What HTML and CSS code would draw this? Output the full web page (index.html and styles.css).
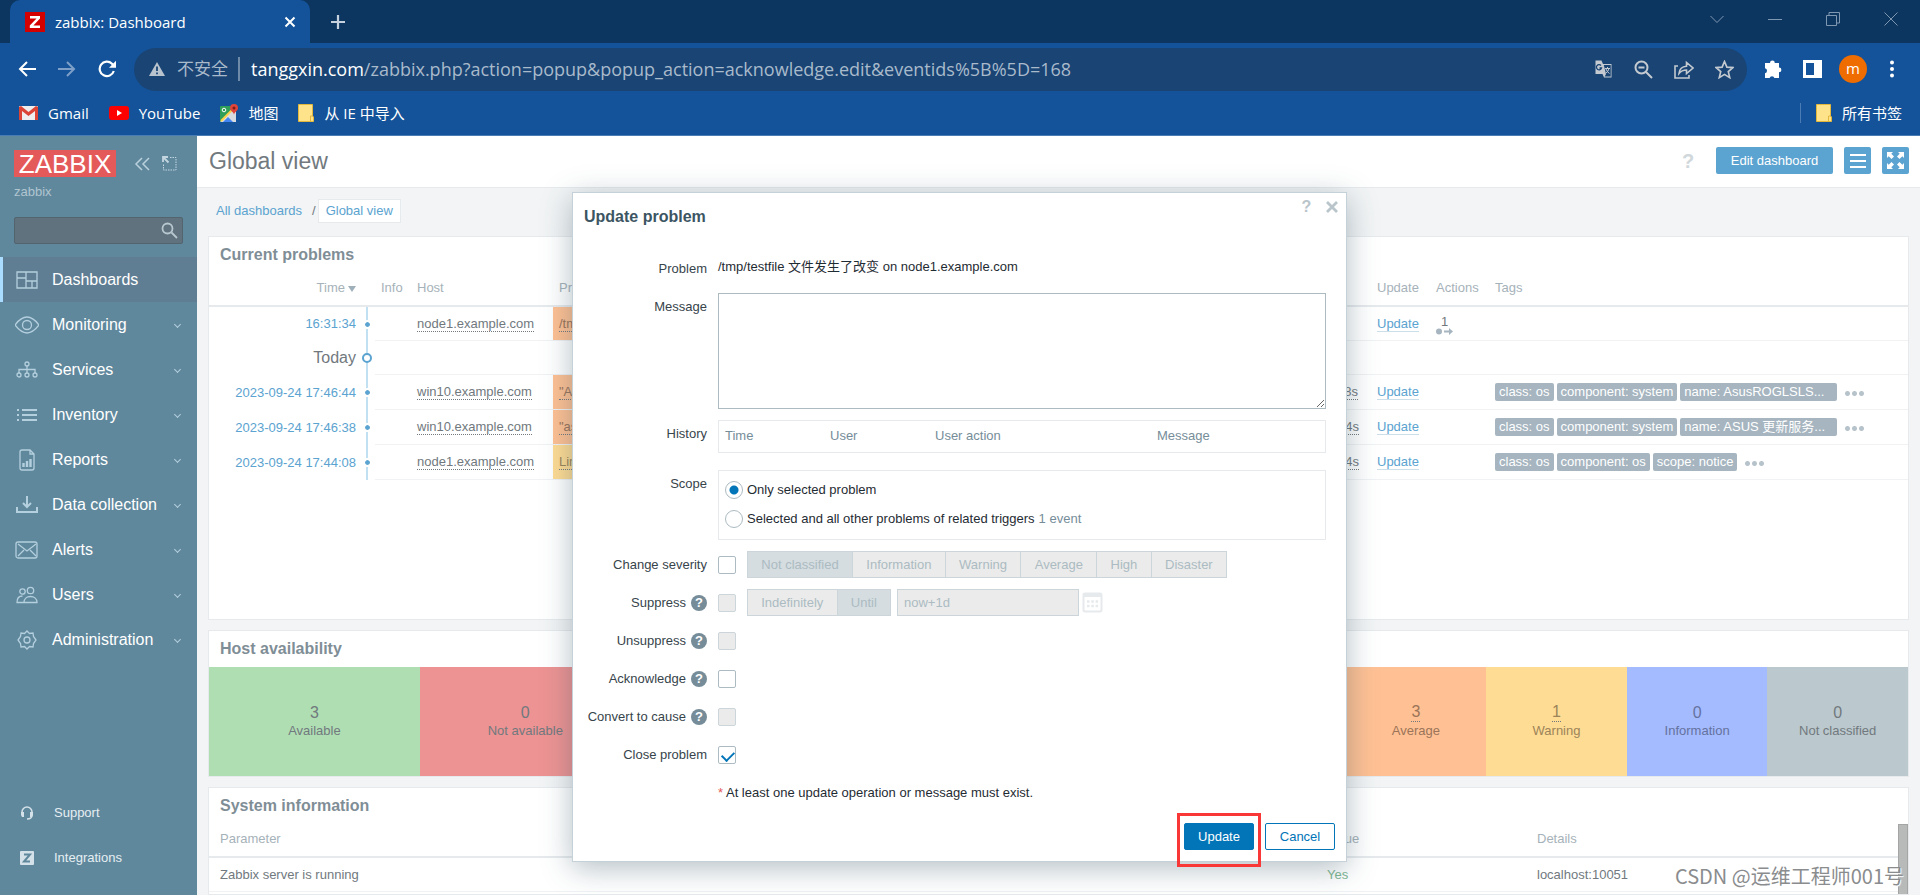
FILE: index.html
```html
<!DOCTYPE html>
<html lang="en">
<head>
<meta charset="utf-8">
<title>zabbix: Dashboard</title>
<link rel="stylesheet" href="styles.css">
</head>
<body>
<header class="browser">
  <div class="tabstrip">
    <div class="tab">
      <svg class="favicon" width="20" height="20" viewBox="0 0 20 20"><rect width="20" height="20" fill="#d40000"/><path d="M5 4h10v2.6L8.4 13.6H15V16H4.800V13.500L11.500 6.500H5z" fill="#fff"/></svg>
      <span class="tab-title">zabbix: Dashboard</span>
      <button class="icon-btn" aria-label="Close tab"><svg width="12" height="12" viewBox="0 0 12 12"><path d="M1.500 1.500l9 9M10.500 1.500l-9 9" stroke="#fff" stroke-width="2"/></svg></button>
    </div>
    <button class="icon-btn new-tab" aria-label="New tab"><svg width="16" height="16" viewBox="0 0 16 16"><path d="M8 1v14M1 8h14" stroke="#c5d1de" stroke-width="2.200"/></svg></button>
    <div class="window-controls">
      <svg width="14" height="14" viewBox="0 0 14 14"><path d="M.5 4L7 10.500 13.500 4"/></svg>
      <svg width="14" height="14" viewBox="0 0 14 14"><path d="M0 7.500h14"/></svg>
      <svg width="14" height="14" viewBox="0 0 14 14"><path d="M.5 3.500h10v10H.5zM3 3.500V.5h10.500v10.500h-3"/></svg>
      <svg width="14" height="14" viewBox="0 0 14 14"><path d="M.5.5l13 13M13.500.5l-13 13"/></svg>
    </div>
  </div>
  <div class="toolbar">
    <button class="icon-btn" aria-label="Back"><svg width="18" height="16" viewBox="0 0 18 16" fill="none" stroke="#fff" stroke-width="2"><path d="M18 8H2M9 1L2 8l7 7"/></svg></button>
    <button class="icon-btn" aria-label="Forward"><svg width="18" height="16" viewBox="0 0 18 16" fill="none" stroke="#7d9fc8" stroke-width="2"><path d="M0 8h16M9 1l7 7-7 7"/></svg></button>
    <button class="icon-btn" aria-label="Reload"><svg width="18" height="18" viewBox="0 0 18 18"><path d="M15.800 11A7.200 7.200 0 1 1 14 3.800L16 6" fill="none" stroke="#fff" stroke-width="2.200"/><path d="M18 .8v7h-7z" fill="#fff"/></svg></button>
    <div class="omnibox">
      <svg width="16" height="14" viewBox="0 0 16 14"><path d="M8 0l8 14H0z" fill="#b9c3cd"/><path d="M8 4.500v4.500M8 10.500v1.800" stroke="#194474" stroke-width="1.800"/></svg>
      <span class="insecure">不安全</span>
      <span class="url"><span class="domain">tanggxin.com</span>/zabbix.php?action=popup&amp;popup_action=acknowledge.edit&amp;eventids%5B%5D=168</span>
      <div class="omni-icons">
        <svg width="19" height="19" viewBox="0 0 19 19"><path d="M1.500.5h6L9 4h8.500v13.500H10L8.500 14h-7z" fill="#c4cad0"/><path d="M9.800 5h6.900v11.500h-6L12 14z" fill="#194474"/><path d="M7 5.500a2.600 2.600 0 1 0 .5 2.500H5.500" fill="none" stroke="#194474" stroke-width="1.300"/><path d="M11 8.500h5M13.500 7v1.500M15 8.500q-1 3.500-3 4.500M12 9q1 3 3.500 4.500" fill="none" stroke="#c4cad0"/></svg>
        <svg width="19" height="19" viewBox="0 0 19 19" fill="none" stroke="#c4cad0" stroke-width="2"><circle cx="7.500" cy="7.500" r="6"/><path d="M12 12l6 6M4.500 7.500h6"/></svg>
        <svg width="20" height="19" viewBox="0 0 20 19" fill="none" stroke="#c4cad0" stroke-width="1.600"><path d="M4 6H1v12h14v-3M5 13.500c.5-5 3-7 7.500-7.300V2.500L19 8l-6.500 5.500V10C9 10 7 11 5 13.500z"/></svg>
        <svg width="19" height="19" viewBox="0 0 19 19"><path d="M9.500 1.500l2.400 5.600 6 .5-4.600 4 1.400 6-5.200-3.200-5.200 3.200 1.400-6-4.600-4 6-.5z" fill="none" stroke="#c4cad0" stroke-width="1.700"/></svg>
      </div>
    </div>
    <div class="toolbar-right">
      <svg width="20" height="20" viewBox="0 0 20 20"><path d="M2 4h5a2.400 2.400 0 1 1 4.800 0H16v4.500a2.400 2.400 0 1 1 0 4.800V19h-4.600a2.500 2.500 0 0 0-4.800 0H2v-4.800a2.500 2.500 0 0 0 0-4.900z" fill="#fff"/></svg>
      <svg width="19" height="18" viewBox="0 0 19 18"><path d="M0 0h19v18H0zM3 3v12h8V3z" fill="#fff" fill-rule="evenodd"/></svg>
      <span class="avatar">m</span>
      <svg width="6" height="18" viewBox="0 0 6 18" fill="#fff"><circle cx="3" cy="2.500" r="2"/><circle cx="3" cy="9" r="2"/><circle cx="3" cy="15.500" r="2"/></svg>
    </div>
  </div>
  <nav class="bookmarks">
    <a href="#"><svg width="19" height="14" viewBox="0 0 19 14"><rect width="19" height="14" rx="1" fill="#eee"/><path d="M0 1v13h3V5l6.500 5L16 5v9h3V1l-2-1-7.500 6L2 0z" fill="#dc4436"/></svg>Gmail</a>
    <a href="#"><svg width="20" height="14" viewBox="0 0 20 14"><rect width="20" height="14" rx="3" fill="#f00"/><path d="M8 4l5 3-5 3z" fill="#fff"/></svg>YouTube</a>
    <a href="#"><svg width="18" height="18" viewBox="0 0 18 18"><rect y="2" width="16" height="16" rx="1" fill="#2f9e58"/><path d="M0 18L16 2v16z" fill="#d9dde0"/><path d="M3 18l5-5 5 5z" fill="#4285f4"/><path d="M1 17L12 6" stroke="#fbd14b" stroke-width="2"/><path d="M14 11c0-3-4-4-4-7a4 4 0 0 1 8 0c0 3-4 4-4 7z" fill="#e0443a"/><circle cx="14" cy="4" r="1.500" fill="#7c1d16"/><circle cx="4" cy="6" r="1.800" fill="none" stroke="#fff"/></svg>地图</a>
    <a href="#"><svg width="16" height="18" viewBox="0 0 16 18"><path d="M.5.5h14V12l1 1v4.500H.5z" fill="#ffe38b" stroke="#e3b83d"/><path d="M12.500 17v-5h2" fill="none" stroke="#e3b83d"/></svg>从 IE 中导入</a>
    <a href="#" class="all-bookmarks"><svg width="16" height="18" viewBox="0 0 16 18"><path d="M.5.5h14V12l1 1v4.500H.5z" fill="#ffe38b" stroke="#e3b83d"/><path d="M12.500 17v-5h2" fill="none" stroke="#e3b83d"/></svg>所有书签</a>
  </nav>
</header>

<div class="app">
  <aside class="sidebar">
    <div class="brand">
      <span class="logo">ZABBIX</span>
      <button class="icon-btn" aria-label="Collapse sidebar"><svg width="16" height="14" viewBox="0 0 16 14" fill="none" stroke="#b9d0dd" stroke-width="1.500"><path d="M8 1L2 7l6 6M15 1L9 7l6 6"/></svg></button>
      <button class="icon-btn" aria-label="Hide sidebar"><svg width="15" height="15" viewBox="0 0 15 15" fill="none" stroke="#c3d6e0"><path d="M8 1.500h6v12.500H1.500V8" stroke-dasharray="1.500 1"/><path d="M1 6V1h5M1.500 1.500l5 5" stroke-width="1.800"/></svg></button>
    </div>
    <div class="server">zabbix</div>
    <div class="search">
      <input type="text" aria-label="Search">
      <svg width="17" height="17" viewBox="0 0 17 17" fill="none" stroke="#b8c8d1" stroke-width="1.800"><circle cx="6.500" cy="6.500" r="5"/><path d="M10.500 10.500l5.500 5.500"/></svg>
    </div>
    <nav class="menu">
      <a href="#" class="active"><svg viewBox="0 0 24 24"><path d="M2 4h20v16H2zM11 4v16M2 10h9M11 13h11M17 13v7"/></svg>Dashboards</a>
      <a href="#"><svg viewBox="0 0 24 24"><path d="M0 12Q6 4 12 4t12 8q-6 8-12 8T0 12z"/><circle cx="12" cy="12" r="4.500"/></svg>Monitoring<i></i></a>
      <a href="#"><svg viewBox="0 0 24 24"><circle cx="12" cy="6" r="2"/><circle cx="4" cy="17" r="2"/><circle cx="12" cy="17" r="2"/><circle cx="20" cy="17" r="2"/><path d="M12 8v7M4 15v-3.500h16V15"/></svg>Services<i></i></a>
      <a href="#"><svg viewBox="0 0 24 24"><path d="M7 7h15M7 12h15M7 17h15M2 7h2M2 12h2M2 17h2" stroke-width="2.200"/></svg>Inventory<i></i></a>
      <a href="#"><svg viewBox="0 0 24 24"><path d="M15 2H7a2 2 0 0 0-2 2v16a2 2 0 0 0 2 2h10a2 2 0 0 0 2-2V6zM15 2v4h4"/><path d="M8.500 19v-4M12 19v-6M15.500 19v-8" stroke-width="2.400"/></svg>Reports<i></i></a>
      <a href="#"><svg viewBox="0 0 24 24"><path d="M2 14v5h20v-5" stroke-width="2"/><path d="M12 3v11M8 10l4 4 4-4" stroke-width="2"/></svg>Data collection<i></i></a>
      <a href="#"><svg viewBox="0 0 24 24"><rect x="1" y="4" width="21" height="16" rx="2"/><path d="M3 6l9 7 9-7M3 18l6-6M21 18l-6-6"/></svg>Alerts<i></i></a>
      <a href="#"><svg viewBox="0 0 24 24"><circle cx="15.500" cy="7.500" r="3.200"/><circle cx="7.500" cy="8.500" r="2.700"/><path d="M9 19.500c0-8 13-8 13 0zM9 19.500H2c0-5 2-6.500 5.500-6.500"/></svg>Users<i></i></a>
      <a href="#"><svg viewBox="0 0 24 24"><circle cx="12" cy="12" r="3"/><path d="M12 3l2.500 2.500 3.500-.5.500 3.500L21 12l-2.500 3.500-.5 3.500-3.500-.5L12 21l-2.500-2.500L6 19l-.5-3.500L3 12l2.500-3.500L6 5l3.500.5z"/></svg>Administration<i></i></a>
    </nav>
    <nav class="menu-small">
      <a href="#"><svg width="14" height="14" viewBox="0 0 14 14"><path d="M2 7V6a5 5 0 0 1 10 0v3q0 4-5 4" fill="none" stroke="#d5e1e8" stroke-width="1.500"/><path d="M1 6h3v5H2L1 9zM13 6h-3v5h2l1-2z" fill="#d5e1e8"/></svg>Support</a>
      <a href="#"><svg width="14" height="14" viewBox="0 0 14 14"><rect width="14" height="14" rx="1" fill="#d5e1e8"/><path d="M4 3.500h6L4 10.500h6" fill="none" stroke="#5f889d" stroke-width="2"/></svg>Integrations</a>
    </nav>
  </aside>

  <main class="content">
    <div class="page-head">
      <h1>Global view</h1>
      <a href="#" class="help">?</a>
      <button class="head-btn edit">Edit dashboard</button>
      <button class="head-btn square" aria-label="Actions"><svg width="16" height="16" viewBox="0 0 16 16"><path d="M0 2h16M0 8h16M0 14h16" stroke="#fff" stroke-width="2"/></svg></button>
      <button class="head-btn square" aria-label="Kiosk mode"><svg width="17" height="17" viewBox="0 0 17 17"><path d="M0 0h6L4.300 1.700 7 4.500 4.500 7 1.700 4.300 0 6zM17 0v6l-1.700-1.700L12.500 7 10 4.500l2.700-2.800L11 0zM0 17v-6l1.700 1.700L4.500 10 7 12.500l-2.700 2.800L6 17zM17 17h-6l1.700-1.700L10 12.500l2.500-2.500 2.800 2.700L17 11z" fill="#fff"/></svg></button>
    </div>
    <nav class="crumbs"><a href="#">All dashboards</a><span>/</span><a href="#" class="current">Global view</a></nav>
    <div class="grid">
      <section class="widget problems">
        <h2>Current problems</h2>
        <table>
          <colgroup><col class="c-time"><col class="c-line"><col class="c-info"><col class="c-host"><col><col class="c-dur"><col class="c-act"><col class="c-act"><col class="c-tags"></colgroup>
          <thead><tr><th class="time">Time<b class="sort"></b></th><th></th><th>Info</th><th>Host</th><th>Problem</th><th>Duration</th><th>Update</th><th>Actions</th><th>Tags</th></tr></thead>
          <tbody>
            <tr><td class="time"><a href="#">16:31:34</a></td><td class="line"><b class="dot"></b></td><td></td><td><span class="dotted">node1.example.com</span></td><td class="sev average"><span class="dotted">/tmp/testfile 文件发生了改变</span></td><td></td><td><a class="upd" href="#">Update</a></td><td><span class="action">1<svg width="17" height="7" viewBox="0 0 17 7"><circle cx="3" cy="3.500" r="3"/><path d="M8 2.500h5V0l4 3.500L13 7V4.500H8z"/></svg></span></td><td></td></tr>
            <tr><td class="time today">Today</td><td class="line"><b class="ring"></b></td><td colspan="7"></td></tr>
            <tr><td class="time"><a href="#">2023-09-24 17:46:44</a></td><td class="line"><b class="dot"></b></td><td></td><td><span class="dotted">win10.example.com</span></td><td class="sev average"><span class="dotted">"AsusROGLSLService"</span></td><td><span class="dotted">11h 22m 8s</span></td><td><a class="upd" href="#">Update</a></td><td></td><td><div class="tags"><span>class: os</span><span>component: system</span><span class="long">name: AsusROGLSLS...</span><b class="more"></b></div></td></tr>
            <tr><td class="time"><a href="#">2023-09-24 17:46:38</a></td><td class="line"><b class="dot"></b></td><td></td><td><span class="dotted">win10.example.com</span></td><td class="sev average"><span class="dotted">"asus"</span></td><td><span class="dotted">1h 22m 14s</span></td><td><a class="upd" href="#">Update</a></td><td></td><td><div class="tags"><span>class: os</span><span>component: system</span><span class="long">name: ASUS 更新服务...</span><b class="more"></b></div></td></tr>
            <tr><td class="time"><a href="#">2023-09-24 17:44:08</a></td><td class="line"><b class="dot"></b></td><td></td><td><span class="dotted">node1.example.com</span></td><td class="sev warning"><span class="dotted">Linux</span></td><td><span class="dotted">1h 24m 44s</span></td><td><a class="upd" href="#">Update</a></td><td></td><td><div class="tags"><span>class: os</span><span>component: os</span><span>scope: notice</span><b class="more"></b></div></td></tr>
          </tbody>
        </table>
      </section>
      <section class="widget totals">
        <h2>Host availability</h2>
        <div class="cells">
          <div class="green"><strong>3</strong>Available</div>
          <div class="red"><strong>0</strong>Not available</div>
          <div class="grey"><strong>0</strong>Unknown</div>
          <div class="plain"><strong>3</strong>Total</div>
        </div>
      </section>
      <section class="widget totals">
        <h2>Problems by severity</h2>
        <div class="cells">
          <div class="disaster"><strong>0</strong>Disaster</div>
          <div class="high"><strong>0</strong>High</div>
          <div class="average"><strong class="dotted">3</strong>Average</div>
          <div class="warning"><strong class="dotted">1</strong>Warning</div>
          <div class="info"><strong>0</strong>Information</div>
          <div class="none"><strong>0</strong>Not classified</div>
        </div>
      </section>
      <section class="widget system">
        <h2>System information</h2>
        <div class="scroll">
          <table>
            <colgroup><col><col class="c-value"><col class="c-details"></colgroup>
            <thead><tr><th>Parameter</th><th>Value</th><th>Details</th></tr></thead>
            <tbody><tr><td>Zabbix server is running</td><td class="yes">Yes</td><td>localhost:10051</td></tr></tbody>
          </table>
          <div class="scrollbar"></div>
        </div>
      </section>
    </div>
  </main>
</div>

<form class="modal" role="dialog" aria-labelledby="modal-title">
  <div class="modal-head">
    <h2 id="modal-title">Update problem</h2>
    <button type="button" class="head-icon" aria-label="Help">?</button>
    <button type="button" class="head-icon" aria-label="Close"><svg width="12" height="12" viewBox="0 0 12 12"><path d="M1 1l10 10M11 1L1 11" stroke="#b9c5cb" stroke-width="2.800"/></svg></button>
  </div>
  <div class="form">
    <span class="label">Problem</span><div class="value">/tmp/testfile 文件发生了改变 on node1.example.com</div>
    <label for="message">Message</label><textarea id="message"></textarea>
    <span class="label">History</span>
    <div class="box history"><table><thead><tr><th class="h1">Time</th><th class="h1">User</th><th class="h2">User action</th><th>Message</th></tr></thead></table></div>
    <span class="label">Scope</span>
    <div class="box scope">
      <label><input type="radio" name="scope" checked>Only selected problem</label>
      <label><input type="radio" name="scope">Selected and all other problems of related triggers <em>1 event</em></label>
    </div>
    <label for="severity">Change severity</label>
    <div class="field"><input type="checkbox" id="severity">
      <div class="segments severity"><button type="button" class="on" disabled>Not classified</button><button type="button" disabled>Information</button><button type="button" disabled>Warning</button><button type="button" disabled>Average</button><button type="button" disabled>High</button><button type="button" disabled>Disaster</button></div>
    </div>
    <label for="suppress">Suppress<b class="hint">?</b></label>
    <div class="field"><input type="checkbox" id="suppress" disabled>
      <div class="segments until"><button type="button" disabled>Indefinitely</button><button type="button" class="on" disabled>Until</button></div>
      <input type="text" class="date" aria-label="Suppress until" value="now+1d" disabled>
      <button type="button" class="icon-btn calendar" aria-label="Open calendar" disabled><svg width="21" height="21" viewBox="0 0 21 21"><rect x="1.500" y="1.500" width="18" height="18" rx="1.500" fill="#fff" stroke="#e6eaec" stroke-width="2"/><path d="M1 1h19v4H1z" fill="#e6eaec"/><path d="M5 9.500h2.500M9.300 9.500h2.500M13.600 9.500h2.500M5 14h2.500M9.300 14h2.500M13.600 14h2.500" stroke="#e6eaec" stroke-width="2.500"/></svg></button>
    </div>
    <label for="unsuppress">Unsuppress<b class="hint">?</b></label><div class="field"><input type="checkbox" id="unsuppress" disabled></div>
    <label for="ack">Acknowledge<b class="hint">?</b></label><div class="field"><input type="checkbox" id="ack"></div>
    <label for="cause">Convert to cause<b class="hint">?</b></label><div class="field"><input type="checkbox" id="cause" disabled></div>
    <label for="close">Close problem</label><div class="field"><input type="checkbox" id="close" checked></div>
    <span></span><div class="note"><span class="star">*</span> At least one update operation or message must exist.</div>
  </div>
  <div class="modal-foot">
    <span class="marked"><button type="button" class="btn primary">Update</button></span>
    <button type="button" class="btn">Cancel</button>
  </div>
</form>
<div class="watermark">CSDN @运维工程师001号</div>
</body>
</html>
```
FILE: styles.css
```css
* { box-sizing: border-box; }
body {
  margin: 0;
  height: 100vh;
  display: flex;
  flex-direction: column;
  overflow: hidden;
  position: relative;
  background: #f2f4f5;
  color: #71797e;
  font: 13px/18px "Liberation Sans", "Noto Sans CJK SC", sans-serif;
}
button, input, textarea { font: inherit; margin: 0; }
a { color: #5ba3d0; text-decoration: none; }
h1, h2 { margin: 0; }
table { border-spacing: 0; width: 100%; table-layout: fixed; }
th { font-weight: normal; text-align: left; color: #a6b2b9; }
svg { display: block; flex: none; }
.icon-btn { border: 0; padding: 0; background: none; display: flex; }

/* Browser window */
.browser { flex: none; background: #145399; border-bottom: 1px solid #4b7db4; color: #fff; font-family: "Open Sans", "Noto Sans CJK SC", sans-serif; }
.tabstrip { display: flex; align-items: center; height: 43px; padding-left: 10px; background: #0c355f; }
.tab { display: flex; align-items: center; gap: 10px; width: 300px; height: 43px; padding: 0 14px 0 15px; background: #145399; border-radius: 10px 10px 0 0; }
.tab-title { flex: 1; font-size: 15px; }
.new-tab { margin-left: 20px; }
.window-controls { display: flex; gap: 44px; margin-left: auto; padding: 0 22px 6px 0; fill: none; stroke: #7f98b2; }
.toolbar { display: flex; align-items: center; gap: 22px; height: 53px; padding: 0 25px 1px 18px; }
.omnibox { flex: 1; display: flex; align-items: center; height: 43px; margin-left: -4px; padding: 0 13px 0 15px; border-radius: 22px; background: #194474; color: #a9bacb; }
.insecure { font-size: 17px; line-height: 24px; margin-left: 12px; padding-right: 10px; border-right: 2px solid #6d8aa8; }
.url { flex: 1; padding-left: 11px; font-size: 18px; line-height: 24px; white-space: nowrap; }
.domain { color: #fff; }
.omni-icons { display: flex; gap: 21px; }
.toolbar-right { display: flex; align-items: center; gap: 20px; margin-left: -6px; }
.avatar { width: 28px; height: 28px; line-height: 26px; margin-left: -3px; border-radius: 50%; background: #ef6c00; text-align: center; font-size: 15px; }
.toolbar-right svg:last-child { margin-left: 2px; }
.bookmarks { display: flex; align-items: center; gap: 20px; height: 39px; padding: 0 18px 5px 19px; }
.bookmarks a { display: flex; align-items: center; gap: 10px; color: #fff; font-size: 15px; }
.bookmarks .all-bookmarks { margin-left: auto; padding-left: 15px; border-left: 1px solid #4b7db4; line-height: 20px; }

/* Sidebar */
.app { flex: 1; display: flex; min-height: 0; }
.sidebar { flex: none; width: 197px; display: flex; flex-direction: column; background: #5f889d; color: #fff; }
.brand { display: flex; align-items: center; padding: 14px 14px 0; }
.logo { width: 102px; height: 27px; background: #e45959; font: 26px/28px "Liberation Sans", sans-serif; text-align: center; margin-right: 18px; }
.brand .icon-btn + .icon-btn { margin-left: 12px; }
.server { margin: 6px 14px 16px; color: #b0c5d0; }
.search { display: flex; align-items: center; height: 27px; margin: 0 14px 13px; padding-right: 4px; border: 1px solid #53646e; border-radius: 2px; background: #60727d; }
.search input { flex: 1; min-width: 0; height: 25px; padding: 0 6px; border: 0; background: none; color: #fff; }
.menu a { display: flex; align-items: center; height: 45px; padding-left: 15px; color: #fff; font-size: 16px; }
.menu svg { width: 24px; height: 24px; margin-right: 13px; fill: none; stroke: #b4cfdd; stroke-width: 1.3; }
.menu .active { background: #5f7e93; border-left: 3px solid #aadcff; padding-left: 12px; }
.menu i { width: 5px; height: 5px; margin: 0 17px 0 auto; border: solid #b4cfdd; border-width: 0 1px 1px 0; transform: rotate(45deg); }
.menu-small { margin-top: auto; padding-bottom: 15px; }
.menu-small a { display: flex; align-items: center; gap: 20px; height: 45px; padding-left: 20px; color: #e6eef2; }

/* Dashboard */
.content { flex: 1; min-width: 0; display: flex; flex-direction: column; }
.page-head { display: flex; align-items: center; height: 52px; padding: 0 11px 2px 12px; background: #fff; border-bottom: 1px solid #e6eaed; }
.page-head h1 { flex: 1; font-size: 23px; font-weight: normal; }
.help { width: 12px; margin-right: 22px; color: #d0d8dc; font-size: 20px; font-weight: bold; }
.head-btn { height: 27px; border: 0; border-radius: 2px; background: #5ba3d0; color: #fff; }
.edit { width: 117px; }
.square { display: flex; align-items: center; justify-content: center; width: 27px; padding: 0; margin-left: 11px; }
.crumbs { display: flex; align-items: center; height: 48px; padding: 0 0 2px 19px; }
.crumbs span { margin: 0 2px 0 10px; }
.crumbs .current { padding: 2px 7px; background: #fff; border: 1px solid #e6eaed; }
.grid { flex: 1; display: grid; grid-template: 384px 147px 1fr / 1fr 1fr; gap: 10px; padding: 0 11px; min-height: 0; }
.widget { background: #fff; border: 1px solid #e6eaed; min-width: 0; overflow: hidden; }
.widget h2 { padding: 0 11px; font-size: 16px; line-height: 36px; color: #7f8e96; }
.problems, .system { grid-column: 1 / -1; }
.widget th, .widget td { height: 34px; padding: 0 6px; border-bottom: 1px solid #f0f2f4; white-space: nowrap; }
.widget th { padding-bottom: 2px; border-bottom: 2px solid #e6eaed; }
.c-time { width: 150px; } .c-line { width: 16px; } .c-info { width: 36px; } .c-host { width: 142px; }
.c-dur { width: 86px; } .c-act { width: 59px; } .c-tags { width: 419px; }
.widget tbody tr + tr + tr td { height: 35px; }
.widget th.time, .widget td.time { text-align: right; padding-right: 3px; }
.widget td.time, .widget td.line { border-bottom: 0; }
.today { font-size: 16px; }
.sort { display: inline-block; margin-left: 3px; border: 4px solid transparent; border-top: 6px solid #9fb0ba; border-bottom: 0; }
.widget td.line { padding: 0; background: linear-gradient(#c1e0f2, #c1e0f2) center / 2px 100% no-repeat; }
.dot, .ring { display: block; margin: auto; border-radius: 50%; }
.dot { width: 9px; height: 9px; background: #5ba3d0; background-clip: padding-box; border: 2px solid #fff; }
.ring { width: 10px; height: 10px; background: #fff; border: 2px solid #5ba3d0; }
.dotted { border-bottom: 1px dotted #71797e; }
.average { background: #ffc194; color: #9b7459; }
.warning { background: #ffdc94; color: #9b845a; }
.sev { overflow: hidden; }
.upd { border-bottom: 1px solid #cbdfeb; }
.action { display: inline-flex; flex-direction: column; align-items: center; line-height: 13px; fill: #a6b5bf; }
.tags { display: flex; gap: 3px; align-items: center; }
.tags span { height: 18px; padding: 0 4px; border-radius: 2px; background: #a6b5bf; color: #fff; }
.tags .long { width: 157px; overflow: hidden; }
.more { width: 20px; height: 5px; margin: 3px 0 0 4px; background: radial-gradient(circle, #b7c3cb 2px, transparent 3px) 0 0 / 7px 5px; }
.totals { display: flex; flex-direction: column; }
.cells { flex: 1; display: flex; }
.cells div { flex: 1; display: flex; flex-direction: column; align-items: center; justify-content: center; }
.cells strong { font-size: 16px; font-weight: normal; line-height: 18px; }
.green { background: #b0deb3; } .red { background: #ed9393; } .grey { background: #bbc8cd; }
.disaster { background: #ef9d9a; } .high { background: #f5ad9c; }
.info { background: #a4bbff; color: #65729e; } .none { background: #bbc8cd; }
.scroll { display: flex; align-items: flex-start; }
.c-value { width: 210px; } .c-details { width: 367px; }
.system td:first-child, .system th:first-child { padding-left: 11px; }
.yes { color: #7fb894; }
.scrollbar { flex: none; width: 10px; height: 80px; background: #b8b9b9; border: 1px solid #a5a5a5; }

/* Dialog */
.modal { position: absolute; top: 192px; left: 50%; width: 775px; margin-left: -388px; background: #fff; border: 1px solid #c5d1d8; box-shadow: 0 6px 28px rgba(55, 85, 100, .38); color: #1f2c33; padding-bottom: 11px; }
.modal-head { display: flex; height: 62px; padding: 4px 2px 0 11px; }
.modal-head h2 { flex: 1; padding-top: 10px; font-size: 16px; line-height: 20px; color: #3c5563; }
.head-icon { display: flex; align-items: center; justify-content: center; width: 25px; height: 20px; padding: 0; border: 0; background: none; color: #b9c5cb; font-size: 16px; font-weight: bold; }
.form { display: grid; grid-template-columns: 123px 1fr; gap: 11px; padding: 0 20px 0 11px; }
.form > label, .label { display: flex; justify-content: flex-end; align-items: center; height: 27px; white-space: nowrap; color: #37444b; }
.value, .note { line-height: 24px; height: 27px; }
.note { line-height: 27px; }
.star { color: #e45959; }
textarea { width: 100%; height: 116px; border: 1px solid #acbbc2; resize: vertical; display: block; }
.box { border: 1px solid #e6eaed; }
.history { height: 33px; margin-bottom: 6px; }
.history th { height: 30px; padding: 0 6px; color: #768d99; }
.h1 { width: 105px; } .h2 { width: 222px; }
.scope { height: 70px; padding: 4px 6px; }
.scope label { display: flex; align-items: center; height: 29px; gap: 4px; }
.scope em { font-style: normal; color: #768d99; }
input[type="radio"], input[type="checkbox"] { appearance: none; flex: none; width: 18px; height: 18px; border: 1px solid #acbbc2; background: #fff; }
input[type="radio"] { border-radius: 50%; }
input[type="radio"]:checked { background: radial-gradient(circle, #0275b8 4px, #fff 5px); }
input[type="checkbox"] { border-radius: 2px; }
input[type="checkbox"]:disabled { background: #ebebeb; border-color: #ccd5d9; }
input[type="checkbox"]:checked::before { content: ""; display: block; width: 10px; height: 6px; margin: 4px 3px; border: solid #0275b8; border-width: 0 0 2px 2px; transform: rotate(-45deg); }
.hint { width: 16px; height: 16px; margin-left: 5px; border-radius: 50%; background: #768d99; color: #fff; font-size: 13px; line-height: 16px; text-align: center; }
.field { display: flex; align-items: center; height: 27px; }
.segments { display: flex; height: 27px; margin-left: 11px; }
.severity { width: 480px; }
.until { width: 144px; }
.segments button { flex: 1 1 auto; padding: 0 6px; border: 1px solid #ccd5d9; background: #ebebeb; color: #acbbc2; }
.segments button + button { border-left: 0; }
.segments .on { background: #d5dde1; }
.date { width: 182px; height: 27px; margin-left: 6px; padding: 0 6px; border: 1px solid #ccd5d9; background: #ebebeb; color: #acbbc2; }
.calendar { margin-left: 3px; }
.modal-foot { display: flex; justify-content: flex-end; gap: 11px; margin-top: 17px; padding-right: 11px; }
.btn { height: 27px; min-width: 70px; border: 1px solid #0275b8; border-radius: 2px; background: #fff; color: #0275b8; }
.primary { background: #0275b8; color: #fff; }
.marked { position: relative; }
.marked::after { content: ""; position: absolute; inset: -10px -7px -17px; border: 3px solid #f93737; }

.watermark { position: absolute; right: 16px; bottom: 5px; font: 20px/28px "Noto Sans CJK SC", sans-serif; color: #8a8c8e; text-shadow: 1px 1px 1px #fff; }
```
